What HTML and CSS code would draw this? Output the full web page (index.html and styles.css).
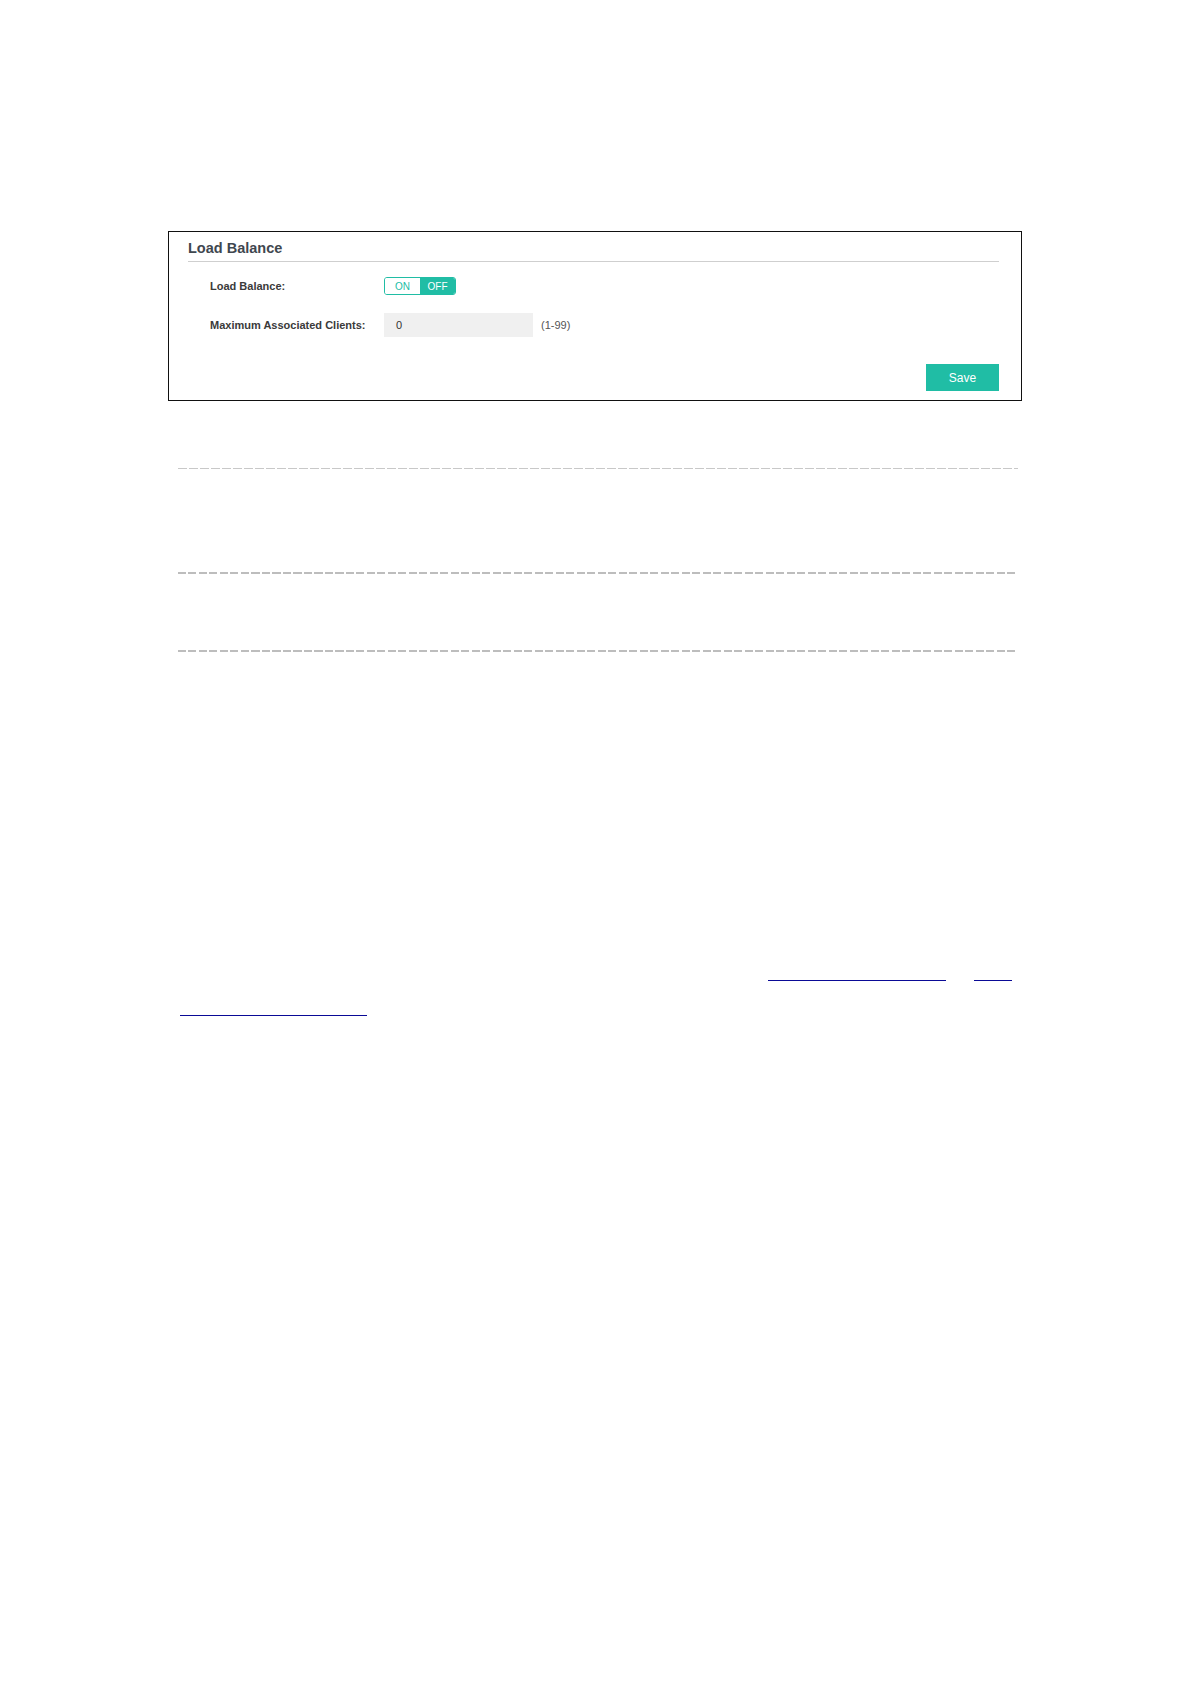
FILE: index.html
```html
<!DOCTYPE html>
<html lang="en">
<head>
    <meta charset="UTF-8">
    <meta name="viewport" content="width=device-width, initial-scale=1.0">
    <title>Load Balance</title>
    <link rel="stylesheet" href="styles.css">
</head>
<body>
    <div class="page">
        <div class="panel">
            <h2 class="panel-title">Load Balance</h2>

            <div class="row row-toggle">
                <span class="label">Load Balance:</span>
                <div class="toggle">
                    <span class="toggle-on">ON</span>
                    <span class="toggle-off">OFF</span>
                </div>
            </div>

            <div class="row row-input">
                <span class="label">Maximum Associated Clients:</span>
                <div class="field">0</div>
                <span class="hint">(1-99)</span>
            </div>

            <div class="actions">
                <button class="save">Save</button>
            </div>
        </div>

        <!-- table rules -->
        <div class="rule rule-light rule-first"></div>
        <div class="rule rule-second"></div>
        <div class="rule rule-third"></div>

        <!-- links -->
        <div class="link-row link-row-one">
            <a class="link link-a" href="#"></a>
            <a class="link link-b" href="#"></a>
        </div>
        <div class="link-row link-row-two">
            <a class="link link-c" href="#"></a>
        </div>
    </div>
</body>
</html>
```

FILE: styles.css
```css
body {
    margin: 0;
    background: #ffffff;
    font-family: 'Liberation Sans', Arial, sans-serif;
    color: #333;
}
.page {
    padding-top: 231px;
    padding-bottom: 40px;
}
.panel {
    margin-left: 168px;
    width: 854px;
    box-sizing: border-box;
    border: 1px solid #111;
    padding: 8px 22px 9px 19px;
}
.panel-title {
    margin: 0;
    font-size: 14.5px;
    line-height: 16px;
    font-weight: bold;
    color: #3f474f;
    padding-bottom: 5px;
    border-bottom: 1px solid #cfcfcf;
}
.row {
    display: flex;
    align-items: center;
    padding-left: 22px;
}
.row-toggle {
    margin-top: 15px;
    height: 18px;
}
.row-input {
    margin-top: 18px;
    height: 24px;
}
.label {
    width: 174px;
    font-size: 11px;
    font-weight: bold;
    color: #3a3a3a;
}
.toggle {
    display: flex;
    width: 72px;
    height: 18px;
    box-sizing: border-box;
    border: 1px solid #20bda5;
    border-radius: 3px;
    overflow: hidden;
    font-size: 10px;
}
.toggle span {
    flex: 1;
    display: flex;
    align-items: center;
    justify-content: center;
}
.toggle-on {
    color: #20bda5;
    background: #ffffff;
}
.toggle-off {
    color: #ffffff;
    background: #20bda5;
}
.field {
    width: 149px;
    height: 24px;
    box-sizing: border-box;
    padding-left: 12px;
    background: #f0f0f0;
    font-size: 11px;
    line-height: 24px;
    color: #333;
}
.hint {
    margin-left: 8px;
    font-size: 11px;
    color: #555;
}
.actions {
    display: flex;
    justify-content: flex-end;
    margin-top: 27px;
}
.save {
    width: 73px;
    height: 27px;
    border: none;
    background: #20bda5;
    color: #ffffff;
    font-family: 'Liberation Sans', Arial, sans-serif;
    font-size: 12px;
    padding: 0;
}
.rule {
    margin-left: 178px;
    width: 840px;
    height: 2px;
    background: repeating-linear-gradient(to right, #bdbdbd 0, #bdbdbd 8px, transparent 8px, transparent 10.5px);
}
.rule-light {
    height: 1px;
    background: repeating-linear-gradient(to right, #c8c8c8 0, #c8c8c8 9px, transparent 9px, transparent 11px);
}
.rule-first {
    margin-top: 67px;
}
.rule-second {
    margin-top: 103px;
}
.rule-third {
    margin-top: 76px;
}
.link-row {
    display: flex;
    height: 1px;
}
.link-row-one {
    margin-top: 328px;
}
.link-row-two {
    margin-top: 34px;
}
.link {
    display: block;
    height: 0;
    border-bottom: 1px solid #0a0a96;
}
.link-a {
    margin-left: 768px;
    width: 178px;
}
.link-b {
    margin-left: 28px;
    width: 38px;
}
.link-c {
    margin-left: 180px;
    width: 187px;
}
```
